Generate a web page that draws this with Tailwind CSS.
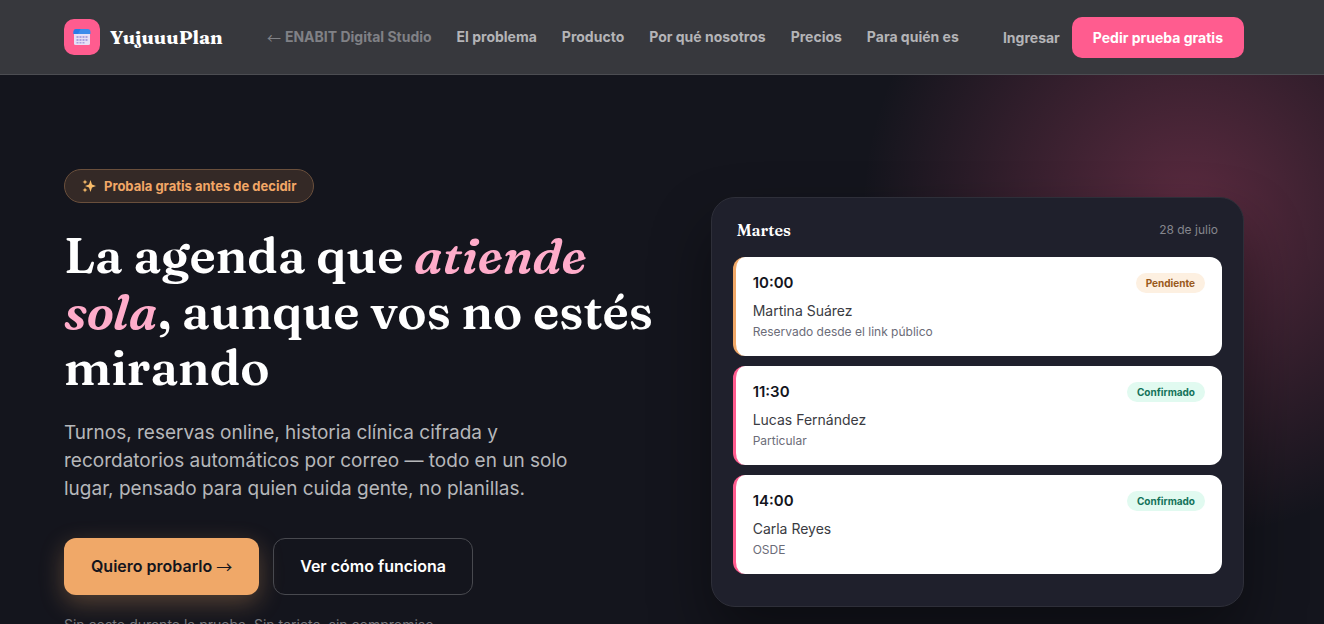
<!DOCTYPE html>
<html lang="es">
<head>
    <meta charset="UTF-8">
    <meta name="viewport" content="width=device-width, initial-scale=1.0">
    <title>YujuuuPlan</title>
    <script src="https://cdn.jsdelivr.net/npm/@tailwindcss/browser@4"></script>
</head>
<body class="h-screen overflow-hidden bg-[#14151d] font-['Inter',sans-serif] text-white">
    <header class="relative z-10 border-b border-[#4c4d52] bg-[#37383d] pr-4">
        <div class="mx-auto flex min-h-[74px] max-w-[1180px] items-center justify-between">
            <a href="#" class="flex items-center gap-2.5">
                <span class="flex size-9 items-center justify-center rounded-[10px] bg-[#ff5c8f]">
                    <svg class="size-[18px]" viewBox="0 0 18 18">
                        <rect x="1" y="2" width="16" height="15" rx="1.500" fill="#e6e0f6"/>
                        <path d="M0.500 6V4a3 3 0 0 1 3-3h11a3 3 0 0 1 3 3v2z" fill="#3b8ceb"/>
                        <path d="M0.500 6V4a3 3 0 0 1 3-3h4L5 6z" fill="#2a7ae6"/>
                        <g fill="#a9a2de">
                            <path d="M3.500 8h2v2h-2zM6.500 8h2v2h-2zM9.500 8h2v2h-2zM12.500 8h2v2h-2zM3.500 11h2v2h-2zM6.500 11h2v2h-2zM9.500 11h2v2h-2zM12.500 11h2v2h-2zM3.500 14h2v1.500h-2zM6.500 14h2v1.500h-2zM9.500 14h2v1.500h-2z"/>
                        </g>
                    </svg>
                </span>
                <span class="font-['Fraunces','Liberation_Serif',serif] text-[19px] font-bold">YujuuuPlan</span>
            </a>
            <nav class="flex items-center gap-[25px] text-[14px] leading-5 font-bold text-[#b4b4b7]">
                <a href="#" class="flex items-center gap-1 text-[#808186]"><span class="font-['Noto_Sans_CJK_JP',sans-serif] font-normal">←</span>ENABIT Digital Studio</a>
                <a href="#problema">El problema</a>
                <a href="#producto">Producto</a>
                <a href="#nosotros">Por qué nosotros</a>
                <a href="#precios">Precios</a>
                <a href="#para-quien">Para quién es</a>
            </nav>
            <div class="flex items-center gap-3 text-[14px] font-bold">
                <a href="#ingresar" class="text-[#b4b4b7]">Ingresar</a>
                <a href="#prueba" class="rounded-[10px] bg-[#ff5c8f] px-[21px] py-2.5 leading-[21px]">Pedir prueba gratis</a>
            </div>
        </div>
    </header>

    <section class="relative overflow-hidden pt-[94px] pr-4 pb-24">
        <div class="absolute -top-[195px] -right-[195px] size-[660px] rounded-full bg-[radial-gradient(circle,#ff5c8f4d_0%,#ff5c8f00_70%)]"></div>
        <div class="relative mx-auto grid max-w-[1180px] grid-cols-[1.1fr_1fr] items-center gap-[60px]">
            <div>
                <span class="inline-flex items-center gap-2 rounded-full border border-[#6a4f3c] bg-[#342926] px-[17px] py-1.5 text-[13px] leading-5 font-bold text-[#f2a766]">
                    <svg class="size-3.5" viewBox="0 0 14 14" fill="#f9bd6a">
                        <path d="M8.500 1 10 5.500 14 7 10 8.500 8.500 13 7 8.500 3 7 7 5.500zM3 .5l.7 1.800 1.800.7-1.800.7L3 5.500l-.7-1.800L.5 3l1.800-.7zM3 8.500l.7 1.800 1.800.7-1.800.7L3 13.500l-.7-1.800L.5 11l1.800-.7z"/>
                    </svg>
                    Probala gratis antes de decidir
                </span>
                <h1 class="mt-6 -mr-4 font-['Fraunces','Liberation_Serif',serif] text-[49px] leading-[56px] font-semibold">
                    La agenda que <em class="text-[#ffacca]">atiende sola</em>, aunque vos no estés mirando
                </h1>
                <p class="mt-6 max-w-[520px] text-[19px] leading-7 text-[#b6b7ba]">
                    Turnos, reservas online, historia clínica cifrada y recordatorios automáticos por correo — todo en un solo lugar, pensado para quien cuida gente, no planillas.
                </p>
                <div class="mt-[35px] flex gap-3.5 text-base font-semibold">
                    <a href="#prueba" class="flex items-center gap-1 rounded-xl bg-[#f0a868] px-[27px] py-4 leading-[25px] text-[#14151d] shadow-[0_8px_24px_#f0a8684d]">Quiero probarlo<span class="font-['Noto_Sans_CJK_JP',sans-serif] font-normal">→</span></a>
                    <a href="#producto" class="rounded-xl border border-[#48494f] px-[26px] py-[15px] leading-[25px]">Ver cómo funciona</a>
                </div>
                <p class="mt-5 text-[14px] leading-5 text-[#77787d]">Sin costo durante la prueba. Sin tarjeta, sin compromiso.</p>
            </div>

            <div class="rounded-3xl border border-[#2e2f39] bg-[#1f202c] px-[21px] pt-5 pb-8 shadow-[0_30px_60px_#00000066]">
                <div class="mb-[15px] flex items-center justify-between px-1">
                    <h2 class="font-['Fraunces','Liberation_Serif',serif] text-base font-semibold">Martes</h2>
                    <span class="text-xs text-[#85868d]">28 de julio</span>
                </div>
                <ul class="space-y-2.5 text-[#14151d]">
                    <li class="flex items-start justify-between rounded-xl border-l-[3px] border-[#f0a868] bg-white px-[17px] py-4">
                        <div>
                            <p class="text-[15px] leading-5 font-semibold">10:00</p>
                            <p class="mt-2 text-sm text-[#3a3b42]">Martina Suárez</p>
                            <p class="mt-0.5 text-xs leading-[17px] text-[#6b6c78]">Reservado desde el link público</p>
                        </div>
                        <span class="rounded-full bg-[#fdf0e1] px-2.5 text-[10px] leading-5 font-bold text-[#9a5a1c]">Pendiente</span>
                    </li>
                    <li class="flex items-start justify-between rounded-xl border-l-[3px] border-[#ff5c8f] bg-white px-[17px] py-4">
                        <div>
                            <p class="text-[15px] leading-5 font-semibold">11:30</p>
                            <p class="mt-2 text-sm text-[#3a3b42]">Lucas Fernández</p>
                            <p class="mt-0.5 text-xs leading-[17px] text-[#6b6c78]">Particular</p>
                        </div>
                        <span class="rounded-full bg-[#e1faf0] px-2.5 text-[10px] leading-5 font-bold text-[#14735a]">Confirmado</span>
                    </li>
                    <li class="flex items-start justify-between rounded-xl border-l-[3px] border-[#ff5c8f] bg-white px-[17px] py-4">
                        <div>
                            <p class="text-[15px] leading-5 font-semibold">14:00</p>
                            <p class="mt-2 text-sm text-[#3a3b42]">Carla Reyes</p>
                            <p class="mt-0.5 text-xs leading-[17px] text-[#6b6c78]">OSDE</p>
                        </div>
                        <span class="rounded-full bg-[#e1faf0] px-2.5 text-[10px] leading-5 font-bold text-[#14735a]">Confirmado</span>
                    </li>
                </ul>
            </div>
        </div>
    </section>
</body>
</html>
